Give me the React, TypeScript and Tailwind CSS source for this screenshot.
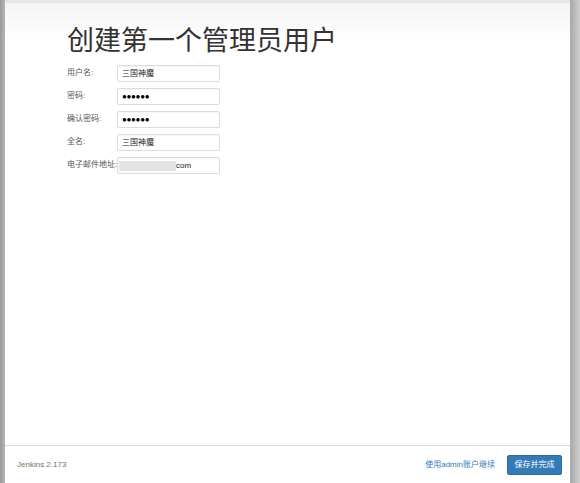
import React from 'react'

const FONT = '"Liberation Sans", "Noto Sans CJK SC", sans-serif'

// 表单字段
const fields: { label: string; value?: string; kind: 'text' | 'password' | 'email' }[] = [
  { label: '用户名:', value: '三国神魔', kind: 'text' },
  { label: '密码:', kind: 'password' },
  { label: '确认密码:', kind: 'password' },
  { label: '全名:', value: '三国神魔', kind: 'text' },
  { label: '电子邮件地址:', kind: 'email' },
]

function FieldRow({ label, value, kind }: (typeof fields)[number]) {
  return (
    <div className="flex h-[17px] items-center">
      <span className="w-[50px] -mt-[2px] text-[8px] leading-none text-[#555] whitespace-nowrap">{label}</span>
      <div className="flex h-[17px] w-[103px] items-center rounded-[2px] border border-[#dcdcdc] bg-white px-[4px] shadow-[inset_0_1px_1px_rgba(0,0,0,0.04)]">
        {kind === 'text' && <span className="text-[8px] leading-none text-[#222]">{value}</span>}
        {kind === 'password' && (
          <span className="text-[8px] leading-none tracking-[-0.3px] text-black">●●●●●●</span>
        )}
        {kind === 'email' && (
          <span className="flex items-center -ml-[3px]">
            <span className="h-[10px] w-[57px] bg-[#e3e3e3]" />
            <span className="text-[8px] leading-none text-[#222]">com</span>
          </span>
        )}
      </div>
    </div>
  )
}

export default function App() {
  return (
    <div className="flex h-[483px] w-full overflow-hidden bg-[#bdbdbd]" style={{ fontFamily: FONT }}>
      {/* 左侧阴影 */}
      <div className="w-[5px] shrink-0 bg-gradient-to-r from-[#9a9a9a] to-[#b5b5b5]" />
      <div className="flex min-w-0 flex-1 flex-col">
        <div className="h-[3px] shrink-0 bg-[#e6e6e6]" />
        <div className="flex flex-1 flex-col bg-white">
          <div className="flex-1 bg-gradient-to-b from-[#f4f4f4] via-white to-white bg-[length:100%_80px] bg-no-repeat">
            <h1 className="pl-[62px] pt-[23px] text-[27px] leading-[31px] font-normal text-[#333]">
              创建第一个管理员用户
            </h1>
            <div className="mt-[8px] flex flex-col gap-[6px] pl-[62px]">
              {fields.map((f) => (
                <FieldRow key={f.label} {...f} />
              ))}
            </div>
          </div>
          <div className="flex h-[38px] shrink-0 items-center border-t border-[#dadada] pl-[12px] pr-[8px]">
            <span className="text-[8px] leading-none text-[#7a7160]">Jenkins 2.173</span>
            <span className="ml-auto text-[8px] leading-none text-[#337ab7]">使用admin账户继续</span>
            <button className="ml-[12px] h-[20px] w-[55px] rounded-[2px] border border-[#2e6da4] bg-[#337ab7] text-[8px] leading-none text-white">
              保存并完成
            </button>
          </div>
        </div>
      </div>
      {/* 右侧阴影 */}
      <div className="w-[10px] shrink-0 bg-gradient-to-r from-[#a8a8a8] to-[#cfcfcf]" />
    </div>
  )
}
